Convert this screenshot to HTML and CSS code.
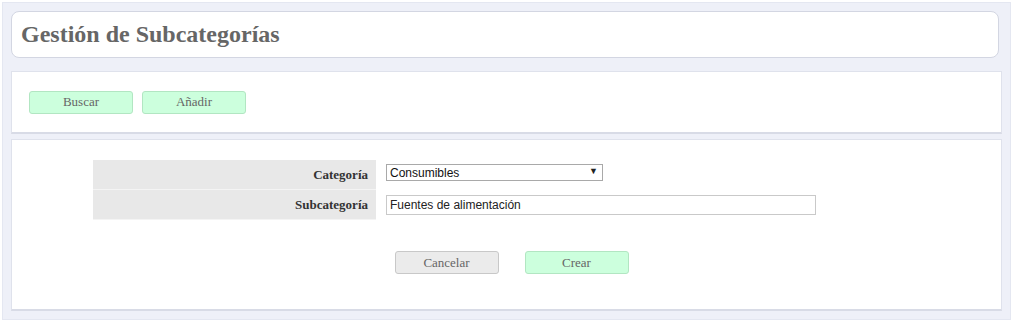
FILE: index.html
```html
<!DOCTYPE html>
<html lang="es">
<head>
    <meta charset="UTF-8">
    <title>Gestión de Subcategorías</title>
    <link rel="stylesheet" href="styles.css">
</head>
<body>
    <div class="wrapper">
        <div class="header">
            <h1>Gestión de Subcategorías</h1>
        </div>

        <div class="panel toolbar">
            <button class="btn btn-green">Buscar</button>
            <button class="btn btn-green">Añadir</button>
        </div>

        <div class="panel form-panel">
            <table class="form-table">
                <tr>
                    <th>Categoría</th>
                    <td class="cell-select">
                        <div class="select-box">
                            <select class="field-select">
                                <option>Consumibles</option>
                            </select>
                            <span class="select-arrow">▼</span>
                        </div>
                    </td>
                </tr>
                <tr>
                    <th>Subcategoría</th>
                    <td><input class="field-text" type="text" value="Fuentes de alimentación"></td>
                </tr>
            </table>

            <div class="actions">
                <button class="btn btn-gray">Cancelar</button>
                <button class="btn btn-green">Crear</button>
            </div>
        </div>
    </div>
</body>
</html>
```

FILE: styles.css
```css
body {
    margin: 0;
    padding: 2px;
    background: #fff;
    font-family: "Liberation Serif", serif;
}
.wrapper {
    width: 991px;
    height: 300px;
    background: #eef0f8;
    border: 1px solid #e4e7f1;
    padding: 8px;
    display: flex;
    flex-direction: column;
}
.header {
    background: #fff;
    border: 1px solid #d3d6e2;
    border-radius: 8px;
    height: 45px;
    margin-right: 3px;
    display: flex;
    align-items: center;
    padding-left: 9px;
}
h1 {
    margin: 0;
    font-size: 24px;
    font-weight: bold;
    color: #666;
}
.panel {
    background: #fff;
    border: 1px solid #dfe2ec;
    border-bottom: 2px solid #d8dbe6;
}
.toolbar {
    margin-top: 13px;
    height: 60px;
    display: flex;
    align-items: center;
    gap: 9px;
    padding-left: 17px;
}
.btn {
    width: 104px;
    height: 23px;
    font-family: "Liberation Serif", serif;
    font-size: 13px;
    color: #666;
    border-radius: 3px;
    cursor: pointer;
    padding: 0;
}
.btn-green {
    background: #ccffdd;
    border: 1px solid #b2e6c2;
}
.btn-gray {
    background: #ebebeb;
    border: 1px solid #c8c8c8;
}
.form-panel {
    margin-top: 5px;
    flex: 1;
    padding-top: 20px;
}
.form-table {
    margin-left: 81px;
    border-collapse: separate;
    border-spacing: 0;
}
.form-table th {
    width: 275px;
    height: 29px;
    background: #e8e8e8;
    text-align: right;
    padding: 0 8px 0 0;
    font-size: 13px;
    color: #333;
    border-bottom: 1px solid #f4f4f4;
}
.form-table td {
    padding: 0 0 0 10px;
}
.cell-select {
    vertical-align: top;
}
.select-box {
    position: relative;
    width: 217px;
    margin-top: 4px;
}
.field-select {
    appearance: none;
    display: block;
    width: 217px;
    height: 17px;
    font-family: "Liberation Sans", sans-serif;
    font-size: 12px;
    color: #111;
    border: 1px solid #a9a9a9;
    border-radius: 0;
    background: #fff;
    padding: 0 3px;
}
.select-arrow {
    position: absolute;
    right: 5px;
    top: 2px;
    font-size: 9px;
    color: #222;
    pointer-events: none;
}
.field-text {
    width: 422px;
    height: 16px;
    font-family: "Liberation Sans", sans-serif;
    font-size: 12px;
    color: #222;
    border: 1px solid #c9c9c9;
    padding: 1px 3px;
}
.actions {
    display: flex;
    justify-content: center;
    gap: 26px;
    margin-top: 31px;
    padding-left: 10px;
}
```
